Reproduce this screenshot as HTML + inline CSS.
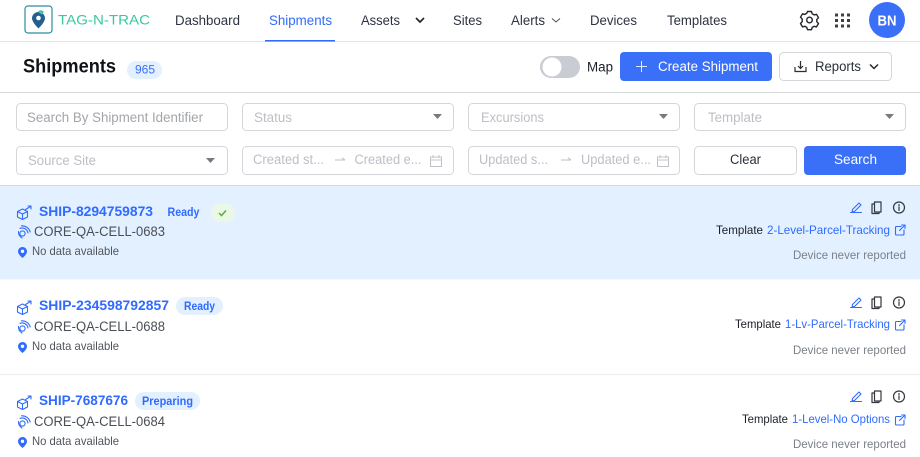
<!DOCTYPE html>
<html lang="en"><head><meta charset="utf-8"><title>Shipments</title>
<style>
html,body{margin:0;padding:0;background:#fff;width:920px;height:457px;overflow:hidden}
svg{display:block}
text{font-family:"Liberation Sans",sans-serif;font-size:13.5px;fill:#2b3038}
.nav{fill:#2d3340}
.ph{fill:#bcbfc4}
.id{font-weight:700;fill:#2f6bff}
.core{fill:#4a4f57}
.nd{font-size:12px;fill:#50555d}
.tpl{font-size:12px;fill:#1b1f25}
.lnk{font-size:12px;fill:#2f6bff}
.dev{font-size:12px;fill:#7b8088}
.bdg{font-size:11.500px;font-weight:700;fill:#2f6bff}
.box{fill:#fff;stroke:#d4d6d9}
.ic{fill:none;stroke:#2f6bff;stroke-width:1.1;stroke-linecap:round;stroke-linejoin:round}
.dk{fill:none;stroke:#33383f;stroke-width:1.2;stroke-linecap:round;stroke-linejoin:round}
</style></head><body>
<svg width="920" height="457" viewBox="0 0 920 457" xmlns="http://www.w3.org/2000/svg">
<defs>
<g id="box"><path class="ic" d="M1 6.500 6 4l5 2.500v5.500L6 14.500 1 12zM1 6.500l5 2.500 5-2.500M6 9v5.500"/><path class="ic" d="M9 4.500 14 1.500M11.500 1h3v3"/></g>
<g id="cell"><circle cx="5.500" cy="9.500" r="2.600" class="ic"/><path class="ic" d="M3 4.300A6 6 0 0 1 11 9M4.500 1.800A8.500 8.500 0 0 1 13.200 8M1.500 7.500Q1.200 11.500 5 14"/></g>
<g id="pin"><path fill="#2f6bff" d="M4.500 0C2 0 0 2 0 4.500 0 7.500 4.500 11 4.500 11S9 7.500 9 4.500C9 2 7 0 4.500 0z"/><circle cx="4.500" cy="4.300" r="1.700" fill="#fff"/></g>
<g id="acts"><path class="ic" d="M0 11.500h11M2 8.500l6.500-6.500 2 2L4 10.500l-2.300.3z"/><path class="dk" d="M24 3h-2.500v9.500h7V11M24 1h6.500v10H24z" stroke-width="1.100"/><circle cx="48.500" cy="6.500" r="5.500" class="dk"/><path d="M48.500 5.800v3.600M48.500 3.500v1" class="dk"/></g>
<g id="ext"><path class="ic" d="M7 2.500H2.500a1 1 0 0 0-1 1v6.500a1 1 0 0 0 1 1H9a1 1 0 0 0 1-1V6M5.500 6.500 10.500 1.500M7.500 1H11v3.500"/></g>
<g id="cal"><path d="M.5 3h11v9.500H.5zM.5 6h11M3 1v3M9 1v3" fill="none" stroke="#c2c4c8"/></g>
<path id="car" d="M0 0h9L4.500 5z" fill="#777a80"/>
<path id="arr" d="M0 4h10M7 1.800 10 4" fill="none" stroke="#bcbfc4"/>
</defs>

<rect x="0" y="41" width="920" height="1" fill="#e3e4e6"/>
<rect x="25" y="6" width="27" height="27" rx="3" fill="#fff" stroke="#2c8c9d" stroke-width="1.200"/>
<path fill="#235f8f" d="M38.500 12c-3.600 0-6.500 2.800-6.500 6.300 0 4 6.500 10.200 6.500 10.200S45 22.300 45 18.300c0-3.500-2.900-6.300-6.500-6.300z"/>
<circle cx="38.500" cy="18" r="2.300" fill="#fff"/>
<path d="M38 11.500c2-2 5-1.500 6 .5l-2.500 2.500c-1-1-2-1-3.500-3z" fill="#46c8a8"/>
<text x="58" y="24.500" textLength="92" lengthAdjust="spacingAndGlyphs" style="font-size:14px;fill:#3cc79f">TAG-N-TRAC</text>

<text class="nav" x="175" y="25" textLength="65" lengthAdjust="spacingAndGlyphs">Dashboard</text>
<text class="nav" x="269" y="25" textLength="63" lengthAdjust="spacingAndGlyphs" style="fill:#2f6bff">Shipments</text>
<rect x="265" y="40" width="70" height="1.500" fill="#2f6bff"/>
<text class="nav" x="361" y="25" textLength="39" lengthAdjust="spacingAndGlyphs">Assets</text>
<path d="M416 18l4 4 4-4" fill="none" stroke="#23272e" stroke-width="1.700"/>
<text class="nav" x="453" y="25" textLength="29" lengthAdjust="spacingAndGlyphs">Sites</text>
<text class="nav" x="511" y="25" textLength="34" lengthAdjust="spacingAndGlyphs">Alerts</text>
<path d="M552 18.500l4 3.500 4-3.500" fill="none" stroke="#4a4f57" stroke-width="1"/>
<text class="nav" x="590" y="25" textLength="47" lengthAdjust="spacingAndGlyphs">Devices</text>
<text class="nav" x="667" y="25" textLength="60" lengthAdjust="spacingAndGlyphs">Templates</text>

<g fill="none" stroke="#22262c" stroke-width="1.400" stroke-linejoin="round"><path d="M807.500 11.500h4l.7 2.300 2 1.100 2.300-.6 2 3.400-1.700 1.800v2.200l1.700 1.800-2 3.400-2.300-.6-2 1.100-.7 2.300h-4l-.7-2.300-2-1.100-2.300.6-2-3.400 1.700-1.800V19l-1.700-1.800 2-3.400 2.300.6 2-1.100z"/><circle cx="809.500" cy="20" r="2.800"/></g>
<g fill="#3c4047"><rect x="835" y="13.500" width="3" height="3"/><rect x="841" y="13.500" width="3" height="3"/><rect x="847" y="13.500" width="3" height="3"/><rect x="835" y="19" width="3" height="3"/><rect x="841" y="19" width="3" height="3"/><rect x="847" y="19" width="3" height="3"/><rect x="835" y="24.500" width="3" height="3"/><rect x="841" y="24.500" width="3" height="3"/><rect x="847" y="24.500" width="3" height="3"/></g>
<circle cx="887" cy="20" r="18" fill="#3a6ff7"/>
<text x="877.500" y="25.500" style="font-size:15px;font-weight:700;fill:#fff" textLength="19" lengthAdjust="spacingAndGlyphs">BN</text>

<text x="23" y="72.500" textLength="93" lengthAdjust="spacingAndGlyphs" style="font-size:19px;font-weight:700;fill:#0f1216">Shipments</text>
<rect x="127" y="61" width="35" height="18" rx="9" fill="#e3f0ff"/>
<text x="135" y="73.500" textLength="20" lengthAdjust="spacingAndGlyphs" style="font-size:11.500px;fill:#3a6ff7">965</text>

<rect x="540" y="56" width="40" height="22" rx="11" fill="#c9ccd2"/>
<circle cx="552" cy="67" r="9.500" fill="#fff"/>
<text x="587" y="71.500" textLength="26" lengthAdjust="spacingAndGlyphs" style="fill:#1b1f25">Map</text>
<rect x="620" y="52" width="152" height="29" rx="4" fill="#3a6ff7"/>
<path d="M636 66.500h11M641.500 61v11" stroke="#dfe7ff" stroke-width="1"/>
<text x="658" y="71" textLength="100" lengthAdjust="spacingAndGlyphs" style="font-weight:500;fill:#fff">Create Shipment</text>
<rect x="779.500" y="52.500" width="112" height="28" rx="4" class="box"/>
<path d="M795 67v4.500h11V67M800.500 61v7M798 66l2.500 2.500L803 66" fill="none" stroke="#2a2e35" stroke-width="1.200"/>
<text x="815" y="71" textLength="46" lengthAdjust="spacingAndGlyphs" style="fill:#2b3038">Reports</text>
<path d="M870 64.500l4 4 4-4" fill="none" stroke="#23272e" stroke-width="1.500"/>
<rect x="0" y="92" width="920" height="1" fill="#d9dadd"/>

<rect x="16.500" y="103.500" width="211" height="27" rx="4" class="box"/>
<text class="ph" x="27" y="122" textLength="176" lengthAdjust="spacingAndGlyphs" style="fill:#a2a5aa">Search By Shipment Identifier</text>
<rect x="242.500" y="103.500" width="211" height="27" rx="4" class="box"/>
<text class="ph" x="254" y="122" textLength="38" lengthAdjust="spacingAndGlyphs">Status</text>
<use href="#car" x="433" y="114"/>
<rect x="468.500" y="103.500" width="211" height="27" rx="4" class="box"/>
<text class="ph" x="481" y="122" textLength="63" lengthAdjust="spacingAndGlyphs">Excursions</text>
<use href="#car" x="659" y="114"/>
<rect x="694.500" y="103.500" width="211" height="27" rx="4" class="box"/>
<text class="ph" x="708" y="122" textLength="54" lengthAdjust="spacingAndGlyphs">Template</text>
<use href="#car" x="885" y="114"/>

<rect x="16.500" y="146.500" width="211" height="28" rx="4" class="box"/>
<text class="ph" x="28" y="165" textLength="68" lengthAdjust="spacingAndGlyphs">Source Site</text>
<use href="#car" x="206" y="158"/>
<rect x="242.500" y="146.500" width="211" height="28" rx="4" class="box"/>
<text class="ph" x="253" y="164" textLength="71" lengthAdjust="spacingAndGlyphs">Created st...</text>
<use href="#arr" x="335" y="156"/>
<text class="ph" x="354.500" y="164" textLength="67" lengthAdjust="spacingAndGlyphs">Created e...</text>
<use href="#cal" x="430" y="154"/>
<rect x="468.500" y="146.500" width="211" height="28" rx="4" class="box"/>
<text class="ph" x="479" y="164" textLength="69" lengthAdjust="spacingAndGlyphs">Updated s...</text>
<use href="#arr" x="561" y="156"/>
<text class="ph" x="581" y="164" textLength="70" lengthAdjust="spacingAndGlyphs">Updated e...</text>
<use href="#cal" x="657" y="154"/>
<rect x="694.500" y="146.500" width="102" height="28" rx="4" class="box"/>
<text x="730" y="164" textLength="31" lengthAdjust="spacingAndGlyphs" style="fill:#2b3038">Clear</text>
<rect x="804" y="146" width="102" height="29" rx="4" fill="#3a6ff7"/>
<text x="834" y="164" textLength="43" lengthAdjust="spacingAndGlyphs" style="font-weight:500;fill:#fff">Search</text>

<rect x="0" y="185" width="920" height="1" fill="#d9dadd"/>
<rect x="0" y="186" width="920" height="93.500" fill="#e3f0ff"/>
<rect x="0" y="374" width="920" height="1" fill="#ebecee"/>

<!-- row 1 -->
<use href="#box" x="16.500" y="205"/>
<text class="id" x="39" y="216" textLength="114" lengthAdjust="spacingAndGlyphs">SHIP-8294759873</text>
<text class="bdg" x="167.500" y="216" textLength="32" lengthAdjust="spacingAndGlyphs">Ready</text>
<rect x="211" y="204" width="24" height="18" rx="9" fill="#ecf8e6"/>
<path d="M219 213l2.500 2.500 4.500-5" fill="none" stroke="#4cb53a" stroke-width="1.500"/>
<use href="#cell" x="17" y="224"/>
<text class="core" x="34" y="236" textLength="131" lengthAdjust="spacingAndGlyphs">CORE-QA-CELL-0683</text>
<use href="#pin" x="18" y="247"/>
<text class="nd" x="32" y="255" textLength="87" lengthAdjust="spacingAndGlyphs">No data available</text>
<use href="#acts" x="850.500" y="201"/>
<text class="tpl" x="716" y="234" textLength="47" lengthAdjust="spacingAndGlyphs">Template</text>
<text class="lnk" x="767" y="234" textLength="123" lengthAdjust="spacingAndGlyphs">2-Level-Parcel-Tracking</text>
<use href="#ext" x="894" y="224"/>
<text class="dev" x="793" y="259" textLength="113" lengthAdjust="spacingAndGlyphs">Device never reported</text>

<!-- row 2 -->
<use href="#box" x="16.500" y="300"/>
<text class="id" x="39" y="310" textLength="130" lengthAdjust="spacingAndGlyphs">SHIP-234598792857</text>
<rect x="176" y="297" width="47" height="18" rx="9" fill="#e3f0ff"/>
<text class="bdg" x="184" y="310" textLength="31" lengthAdjust="spacingAndGlyphs">Ready</text>
<use href="#cell" x="17" y="319"/>
<text class="core" x="34" y="331" textLength="131" lengthAdjust="spacingAndGlyphs">CORE-QA-CELL-0688</text>
<use href="#pin" x="18" y="342"/>
<text class="nd" x="32" y="350" textLength="87" lengthAdjust="spacingAndGlyphs">No data available</text>
<use href="#acts" x="850.500" y="296"/>
<text class="tpl" x="735" y="328" textLength="46" lengthAdjust="spacingAndGlyphs">Template</text>
<text class="lnk" x="785" y="328" textLength="105" lengthAdjust="spacingAndGlyphs">1-Lv-Parcel-Tracking</text>
<use href="#ext" x="894" y="319"/>
<text class="dev" x="793" y="354" textLength="113" lengthAdjust="spacingAndGlyphs">Device never reported</text>

<!-- row 3 -->
<use href="#box" x="16.500" y="395"/>
<text class="id" x="39" y="405" textLength="89" lengthAdjust="spacingAndGlyphs">SHIP-7687676</text>
<rect x="135" y="392" width="65" height="18" rx="9" fill="#e3f0ff"/>
<text class="bdg" x="142" y="405" textLength="51" lengthAdjust="spacingAndGlyphs">Preparing</text>
<use href="#cell" x="17" y="414"/>
<text class="core" x="34" y="426" textLength="131" lengthAdjust="spacingAndGlyphs">CORE-QA-CELL-0684</text>
<use href="#pin" x="18" y="437"/>
<text class="nd" x="32" y="445" textLength="87" lengthAdjust="spacingAndGlyphs">No data available</text>
<use href="#acts" x="850.500" y="390"/>
<text class="tpl" x="742" y="423" textLength="46" lengthAdjust="spacingAndGlyphs">Template</text>
<text class="lnk" x="792" y="423" textLength="98" lengthAdjust="spacingAndGlyphs">1-Level-No Options</text>
<use href="#ext" x="894" y="414"/>
<text class="dev" x="793" y="448" textLength="113" lengthAdjust="spacingAndGlyphs">Device never reported</text>
</svg>
</body></html>
